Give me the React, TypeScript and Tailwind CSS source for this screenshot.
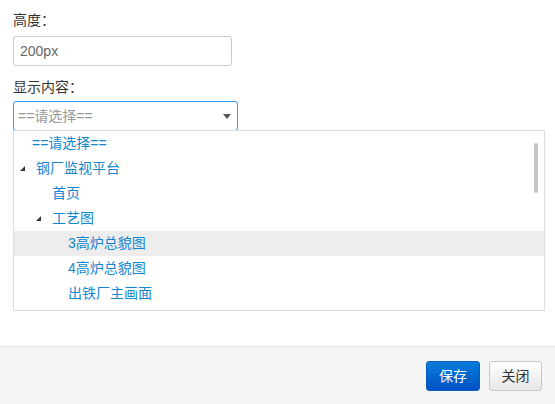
import React from "react";

const Tri = () => (
  <svg width="5" height="5" viewBox="0 0 5 5" className="shrink-0">
    <polygon points="0,5 5,0 5,5" fill="#333" />
  </svg>
);

type Row = { text: string; level: number; tri?: boolean; active?: boolean; root?: boolean };

const rows: Row[] = [
  { text: "==请选择==", level: 0, root: true },
  { text: "钢厂监视平台", level: 0, tri: true },
  { text: "首页", level: 1 },
  { text: "工艺图", level: 1, tri: true },
  { text: "3高炉总貌图", level: 2, active: true },
  { text: "4高炉总貌图", level: 2 },
  { text: "出铁厂主画面", level: 2 },
];

export default function App() {
  return (
    <div
      className="w-[555px] h-[404px] bg-white flex flex-col text-[14px] text-[#333]"
      style={{ fontFamily: '"Liberation Sans", Arial, "Noto Sans CJK SC", sans-serif' }}
    >
      <div className="flex-1 px-[13px] pt-[10px] flex flex-col">
        <div className="h-5 leading-5">高度：</div>
        <div className="mt-[6px] w-[219px] h-[30px] border border-[#ccc] rounded-[3px] pl-[6px] flex items-center text-[#666]">
          200px
        </div>
        <div className="mt-[11px] h-5 leading-5">显示内容：</div>
        <div className="mt-[4px] w-[225px] h-[30px] border border-[#2f9bf2] rounded-[3px] pl-[4px] pr-[6px] flex items-center justify-between text-[#999]">
          <span>==请选择==</span>
          <svg width="8" height="5" viewBox="0 0 8 5">
            <polygon points="0,0 8,0 4,5" fill="#555" />
          </svg>
        </div>
        <div className="relative w-[532px] h-[181px] border border-[#ddd] -mt-[1px] overflow-hidden">
          <div className="flex flex-col">
            {rows.map((r, i) => (
              <div
                key={i}
                className={`h-[25px] flex items-center text-[#1187d0] ${r.active ? "bg-[#ededed]" : ""}`}
              >
                {r.root ? (
                  <span className="pl-[18px]">{r.text}</span>
                ) : (
                  <div className="flex items-center" style={{ paddingLeft: 6 + r.level * 16 }}>
                    <div className="w-[16px] flex items-center">{r.tri ? <Tri /> : null}</div>
                    <span>{r.text}</span>
                  </div>
                )}
              </div>
            ))}
          </div>
          <div className="absolute left-[520px] top-[12px] w-[4px] h-[50px] rounded-[2px] bg-[#c4c4c4]" />
        </div>
      </div>
      <div className="h-[58px] border-t border-[#e5e5e5] bg-[#f5f5f5] flex justify-end items-start pt-[14px] pr-[13px] gap-[9px]">
        <button className="w-[54px] h-[30px] rounded-[3px] border border-[#0a5bbf] bg-gradient-to-b from-[#0b7cda] to-[#0052c4] text-white text-[14px]">
          保存
        </button>
        <button className="w-[53px] h-[30px] rounded-[3px] border border-[#c8c8c8] bg-gradient-to-b from-white to-[#e6e6e6] text-[#333] text-[14px]">
          关闭
        </button>
      </div>
    </div>
  );
}
